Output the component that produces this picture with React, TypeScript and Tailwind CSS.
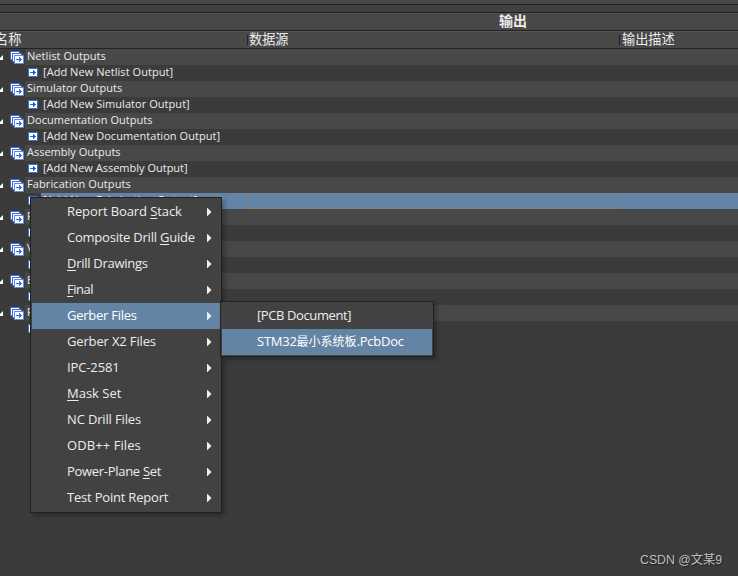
import React from "react";

const groups = [
  { name: "Netlist", title: "tracking-[0.07px]", child: "tracking-[0.05px]" },
  { name: "Simulator", title: "tracking-[0.05px]", child: "tracking-[0.05px]" },
  { name: "Documentation", title: "tracking-[0.05px]", child: "tracking-[0.05px]" },
  { name: "Assembly", title: "tracking-[0px]", child: "tracking-[0px]" },
  { name: "Fabrication", title: "tracking-[0.1px]", child: "tracking-[0.05px]", selected: true },
  { name: "Report", title: "tracking-[0px]", child: "tracking-[0px]" },
  { name: "Validation", title: "tracking-[0px]", child: "tracking-[0px]" },
  { name: "Export", title: "tracking-[0px]", child: "tracking-[0px]" },
  { name: "PostProcess", title: "tracking-[0px]", child: "tracking-[0px]" },
];

// An underscore marks the letter that follows it as the keyboard mnemonic.
const menu = [
  { label: "Report Board _Stack", tracking: "tracking-[-0.1px]" },
  { label: "Composite Drill _Guide", tracking: "tracking-[-0.23px]" },
  { label: "_Drill Drawings", tracking: "tracking-[-0.28px]" },
  { label: "_Final", tracking: "tracking-[-0.5px]" },
  { label: "Gerber Files", tracking: "tracking-[-0.25px]", active: true },
  { label: "Gerber X2 Files", tracking: "tracking-[-0.15px]" },
  { label: "IPC-2581", tracking: "tracking-[-0.12px]" },
  { label: "_Mask Set", tracking: "tracking-[0px]" },
  { label: "NC Drill Files", tracking: "tracking-[-0.15px]" },
  { label: "ODB++ Files", tracking: "tracking-[0.08px]" },
  { label: "Power-Plane _Set", tracking: "tracking-[-0.3px]" },
  { label: "Test Point Report", tracking: "tracking-[-0.2px]" },
];

function StackIcon() {
  return (
    <svg width="14" height="13" viewBox="0 0 14 13" shapeRendering="crispEdges" className="block">
      <rect width="10" height="9" fill="#3c6fd6" />
      <rect x="1" y="1" width="8" height="7" fill="#fff" />
      <rect x="2" y="2" width="10" height="9" fill="#3c6fd6" />
      <rect x="3" y="3" width="8" height="7" fill="#fff" />
      <rect x="4" y="4" width="10" height="9" fill="#5f8be6" />
      <rect x="5" y="5" width="8" height="7" fill="#fff" />
      <path d="M6 8h3V6h1v1h1v1h1v1h-1v1h-1v1H9V9H6z" fill="#3f74e0" />
    </svg>
  );
}

function LeafIcon() {
  return (
    <svg width="10" height="9" viewBox="0 0 10 9" shapeRendering="crispEdges" className="block">
      <rect width="10" height="9" fill="#2f74d6" />
      <rect x="1" y="1" width="8" height="7" fill="#fff" />
      <path d="M2 4h3V2h1v1h1v1h1v1H7v1H6v1H5V5H2z" fill="#2467c8" />
    </svg>
  );
}

function Mnemonic({ label }: { label: string }) {
  const at = label.indexOf("_");
  if (at < 0) return <>{label}</>;
  return (
    <>
      {label.slice(0, at)}
      <span className="underline decoration-1 underline-offset-2">{label[at + 1]}</span>
      {label.slice(at + 2)}
    </>
  );
}

export default function App() {
  return (
    <div className="relative h-[576px] w-[738px] overflow-hidden bg-[#3b3b3b] font-['Open_Sans','Noto_Sans_CJK_SC',sans-serif] text-[#ececec]">
      <div className="h-[5px] border-b border-[#222] bg-[#484848]" />
      <div className="h-2 border-b border-[#222] bg-[#404040]" />
      <div className="h-[18px] border-t border-b border-t-[#525252] border-b-[#222] bg-[#484848] pl-[499px] text-[14px] leading-[14px] font-bold">
        输出
      </div>
      <div className="flex h-[18px] border-t border-b border-t-[#565656] border-b-[#222] bg-[#484848] text-[13.2px] leading-[15px]">
        <div className="h-4 w-[247px]">
          <span className="-ml-[5px]">名称</span>
        </div>
        <div className="mt-[3px] h-[10px] w-px bg-[#222]" />
        <div className="w-[371px] pl-[1px]">数据源</div>
        <div className="mt-[3px] h-[10px] w-px bg-[#222]" />
        <div className="pl-[2px]">输出描述</div>
      </div>

      {groups.map((g) => (
        <div key={g.name} className="text-[11px] leading-[14px] whitespace-nowrap">
          <div className="flex h-4">
            <div className="flex w-[25px]">
              <svg width="4" height="16" viewBox="0 0 4 16" className="mr-[6px] block shrink-0">
                <path d="M3 6v5H-2z" fill="#fff" />
              </svg>
              <div className="h-4 w-[14px] shrink-0 pt-[2px]">
                <StackIcon />
              </div>
            </div>
            <div className="flex-1 bg-[#484848] pl-[2px]">
              <span className={g.title}>{g.name} Outputs</span>
            </div>
          </div>
          <div className="flex h-4">
            <div className="w-[41px] pt-[3px] pl-7">
              <LeafIcon />
            </div>
            <div className={g.selected ? "flex flex-1 bg-[#6384a4] text-white" : "flex flex-1"}>
              <div className="w-[207px] pl-[2px]">
                <span className={g.child}>[Add New {g.name} Output]</span>
              </div>
              {g.selected && (
                <div className="h-4 w-[372px] shrink-0 border border-dotted border-t-[#7c8288] border-r-[#8a8078] border-b-[#b8783c] border-l-[#a8794f]" />
              )}
            </div>
          </div>
        </div>
      ))}

      <div className="absolute top-[197px] left-[30px] w-[192px] border border-[#202020] bg-[#424242] p-px text-[13px] whitespace-nowrap shadow-[3px_3px_4px_rgba(0,0,0,0.25)]">
        {menu.map((m) => (
          <div
            key={m.label}
            className={
              m.active
                ? "flex h-[26px] items-center justify-between bg-[#6384a4] pr-[8px] pl-[35px] text-white"
                : "flex h-[26px] items-center justify-between pr-[8px] pl-[35px]"
            }
          >
            <span className={m.tracking}>
              <Mnemonic label={m.label} />
            </span>
            <svg width="5" height="8" viewBox="0 0 5 8" className="block">
              <path d="M0 0v8h0.500l4-4l-4-4z" fill="#f0f0f0" />
            </svg>
          </div>
        ))}
      </div>

      <div className="absolute top-[301px] left-[220px] w-[214px] border border-[#202020] bg-[#424242] p-px text-[13px] whitespace-nowrap shadow-[3px_3px_4px_rgba(0,0,0,0.25)]">
        <div className="flex h-[26px] items-center pl-[35px]">
          <span className="tracking-[-0.4px]">[PCB Document]</span>
        </div>
        <div className="flex h-[26px] items-center bg-[#6384a4] pl-[35px] text-white">
          <span className="tracking-[-0.25px]">
            STM32<span className="text-[12px] tracking-[0px]">最小系统板</span>.PcbDoc
          </span>
        </div>
      </div>

      <div className="absolute top-[551px] left-[640px] font-['Liberation_Sans','Noto_Sans_CJK_SC',sans-serif] text-[12.300px] leading-[18px] whitespace-nowrap text-[#bdbdbd] [text-shadow:1px_1px_1px_#222]">
        CSDN @文某9
      </div>
    </div>
  );
}
